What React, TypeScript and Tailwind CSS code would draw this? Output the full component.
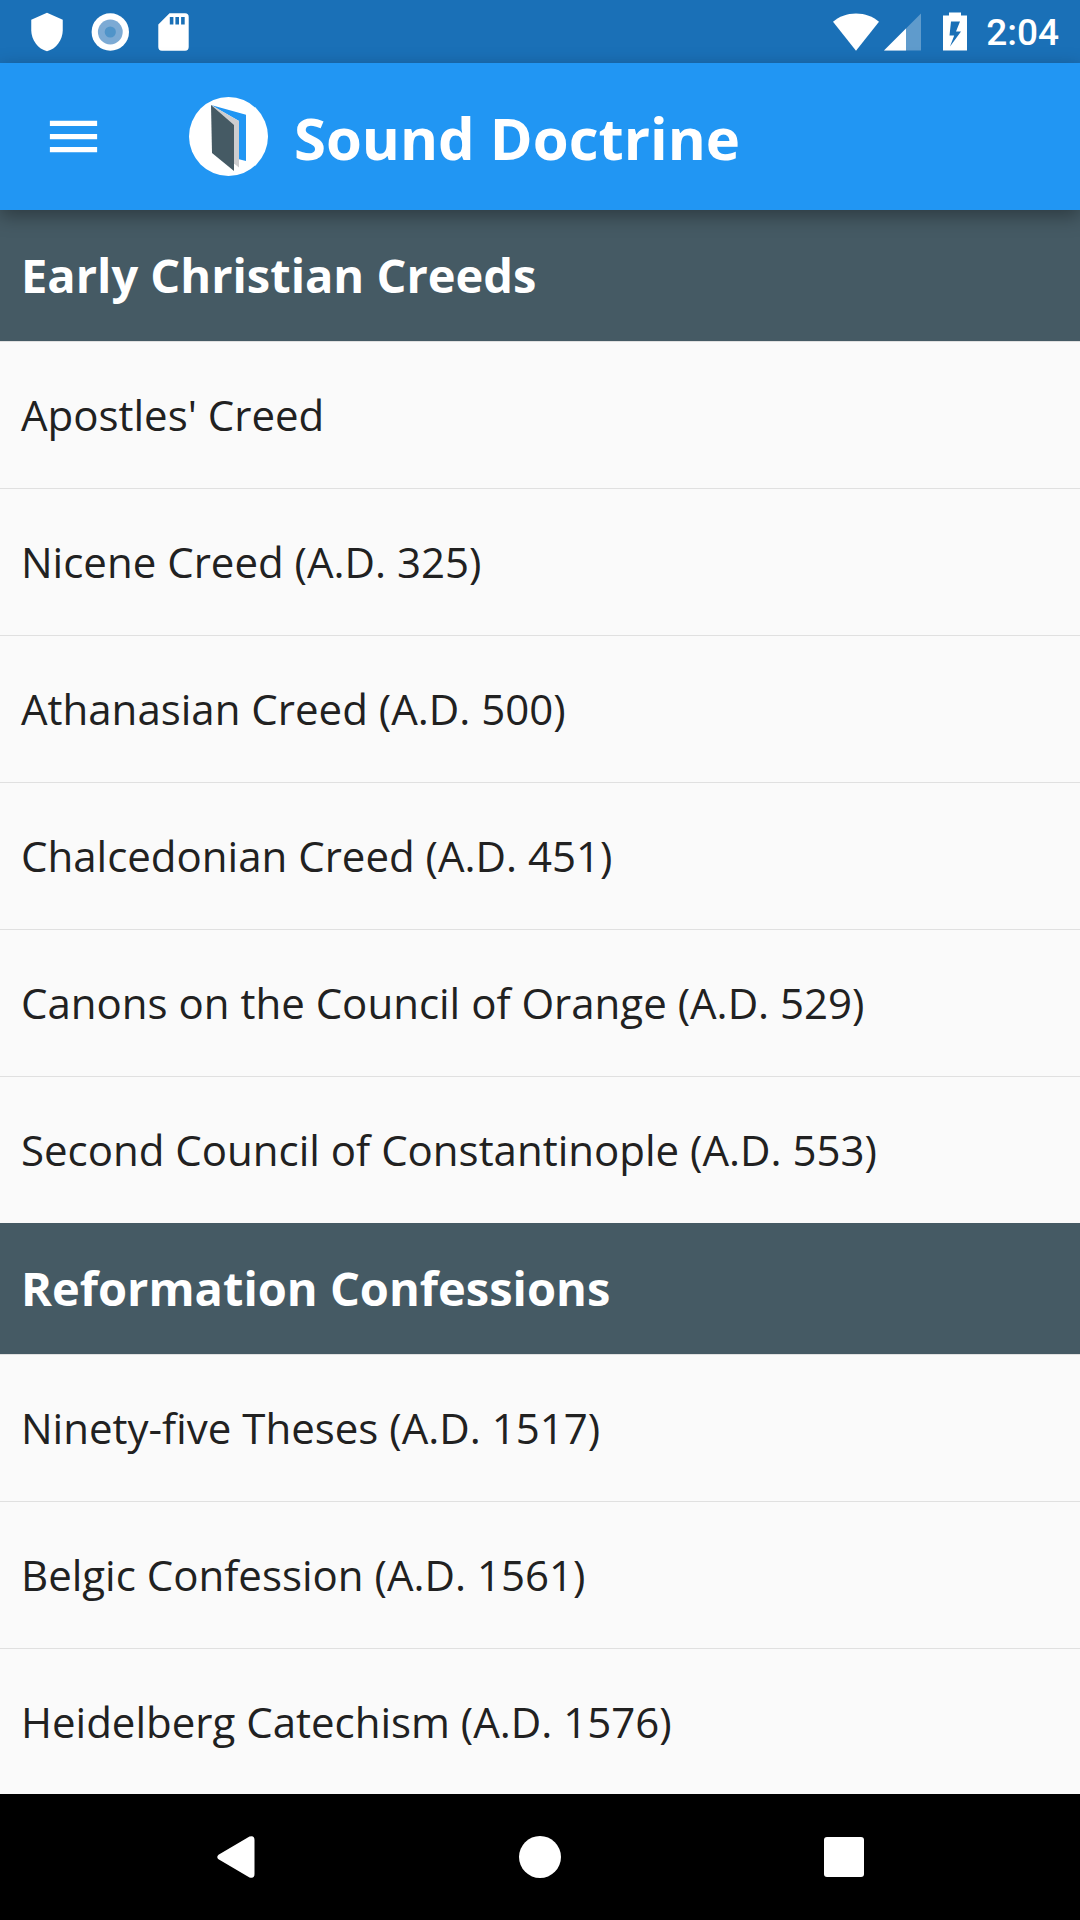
type Section = {
  title: string;
  items: string[];
};

const sections: Section[] = [
  {
    title: "Early Christian Creeds",
    items: [
      "Apostles' Creed",
      "Nicene Creed (A.D. 325)",
      "Athanasian Creed (A.D. 500)",
      "Chalcedonian Creed (A.D. 451)",
      "Canons on the Council of Orange (A.D. 529)",
      "Second Council of Constantinople (A.D. 553)",
    ],
  },
  {
    title: "Reformation Confessions",
    items: [
      "Ninety-five Theses (A.D. 1517)",
      "Belgic Confession (A.D. 1561)",
      "Heidelberg Catechism (A.D. 1576)",
    ],
  },
];

function StatusBar() {
  return (
    <div className="flex h-[63px] shrink-0 items-center justify-between bg-[#1a70b7] pr-[21px] pl-[26px] text-white">
      <div className="flex items-center gap-[21px]">
        <svg className="size-[42px]" viewBox="0 0 24 24" fill="currentColor" aria-hidden="true">
          <path d="M12 1 3 5v6c0 5.55 3.84 10.74 9 12 5.16-1.26 9-6.45 9-12V5z" />
        </svg>
        <svg className="size-[42px]" viewBox="0 0 42 42" aria-hidden="true">
          <circle cx="21.3" cy="21" r="18.7" fill="#fff" />
          <circle cx="21.3" cy="21" r="12.4" fill="#7caad4" />
          <circle cx="21.3" cy="21" r="5.6" fill="#5094c9" />
        </svg>
        <svg className="size-[42px]" viewBox="0 0 42 42" fill="currentColor" aria-hidden="true">
          <path
            fillRule="evenodd"
            d="M17.5 2.3h15.6a3.6 3.6 0 0 1 3.6 3.6v30.2a3.6 3.6 0 0 1-3.6 3.6H9.9a3.6 3.6 0 0 1-3.6-3.6V13.5zM17.8 6v7.6h3.6V6zm5.6 0v7.6H27V6zm5.7 0v7.6h3.6V6z"
          />
        </svg>
      </div>

      <div className="flex items-center">
        <svg className="h-[42px] w-[46px]" viewBox="0 0 46 42" fill="currentColor" aria-hidden="true">
          <path d="M0 10.7C6 5.6 14 2.5 23 2.5s17 3.1 23 8.2L23 39.7z" />
        </svg>
        <svg className="ml-[5px] h-[42px] w-[37px]" viewBox="0 0 37 42" fill="currentColor" aria-hidden="true">
          <path d="M37 2.5v37H0z" opacity="0.3" />
          <path d="M22 17.5v22H0z" />
        </svg>
        <svg className="ml-[22px] h-[42px] w-[24px]" viewBox="0 0 24 42" fill="currentColor" aria-hidden="true">
          <path
            fillRule="evenodd"
            d="M6 1.5h12v3h6v35H0v-35h6zM8 10.5l-1.5 14h4.7L7 35.5l11-15h-5l4-10z"
          />
        </svg>
        <time className="ml-[19px] pt-[2px] font-['Roboto',sans-serif] text-[37px] leading-[42px] font-medium">
          2:04
        </time>
      </div>
    </div>
  );
}

function Logo() {
  return (
    <svg className="size-[79px]" viewBox="0 0 79 79" aria-hidden="true">
      <circle cx="39.5" cy="39.5" r="39.5" fill="#fff" />
      <path d="M22 8l35 9.7V64l-7-1.7V24z" fill="#2196f3" />
      <path d="M22 8l28 16v46.5l-5-4z" fill="#cdcdcf" />
      <path d="M22 8l23 20v46L23 56z" fill="#455a64" />
    </svg>
  );
}

function AppBar() {
  return (
    <header className="relative z-10 flex h-[147px] shrink-0 items-center bg-[#2196f3] px-[42px] text-white shadow-[0_6px_18px_rgba(0,0,0,0.35)]">
      <button type="button" aria-label="Open menu">
        <svg className="size-[63px]" viewBox="0 0 24 24" fill="currentColor" aria-hidden="true">
          <path d="M3 18h18v-2H3zm0-5h18v-2H3zm0-7v2h18V6z" />
        </svg>
      </button>
      <div className="ml-[84px] flex items-center gap-[26px]">
        <Logo />
        <h1 className="pt-[2px] text-[58px] leading-[80px] font-bold">Sound Doctrine</h1>
      </div>
    </header>
  );
}

function NavigationBar() {
  return (
    <nav className="grid h-[126px] shrink-0 grid-cols-3 bg-black px-[84px] text-white">
      <button type="button" aria-label="Back" className="flex items-center justify-center">
        <svg className="size-[42px]" viewBox="0 0 42 42" fill="currentColor" aria-hidden="true">
          <path d="M3.5 18.7 34.5.6Q39.5-1 39.5 4v34q0 5-5 3.4L3.5 23.3q-2.500-2.300 0-4.6z" />
        </svg>
      </button>
      <button type="button" aria-label="Home" className="flex items-center justify-center">
        <span className="size-[42px] rounded-full bg-white" />
      </button>
      <button type="button" aria-label="Recent apps" className="flex items-center justify-center">
        <span className="size-[40px] rounded-[3px] bg-white" />
      </button>
    </nav>
  );
}

export default function App() {
  return (
    <div className="flex h-screen flex-col bg-[#fafafa] font-['Open_Sans',sans-serif] text-[#212121]">
      <StatusBar />
      <AppBar />

      <main className="min-h-0 flex-1 overflow-y-auto [scrollbar-width:none]">
        {sections.map((section) => (
          <section key={section.title}>
            <h2 className="flex h-[131px] items-center bg-[#455a64] px-[21px] text-[47px] font-bold text-white">
              {section.title}
            </h2>
            <ul>
              {section.items.map((item) => (
                <li key={item} className="border-t border-[#e0e0e0]">
                  <a href="#" className="flex h-[146px] items-center px-[21px] pb-[2px] text-[42px]">
                    {item}
                  </a>
                </li>
              ))}
            </ul>
          </section>
        ))}
      </main>

      <NavigationBar />
    </div>
  );
}
